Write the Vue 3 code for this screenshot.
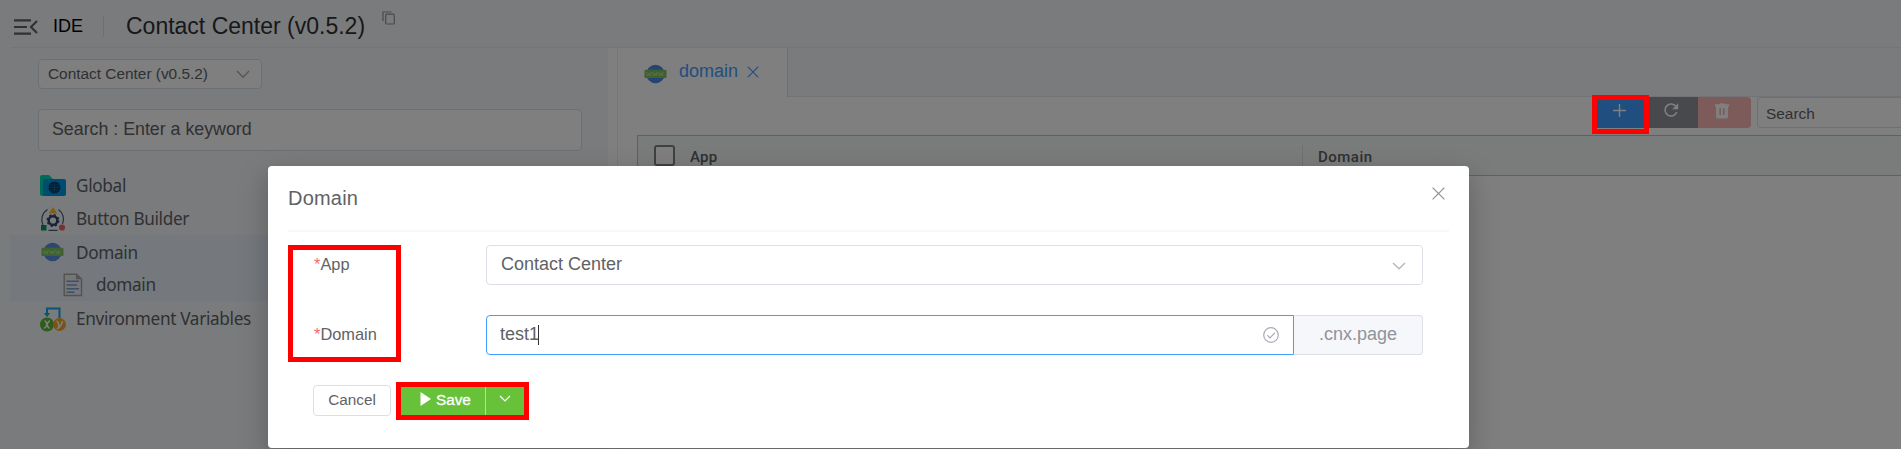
<script setup>
const tree = [
  { label: 'Global', icon: 'folder' },
  { label: 'Button Builder', icon: 'builder' },
  { label: 'Domain', icon: 'globe', active: true },
  { label: 'domain', icon: 'file', active: true, child: true },
  { label: 'Environment Variables', icon: 'env' },
]
</script>

<template>
  <div class="screen">
    <header class="topbar">
      <svg class="menu" width="24" height="16" viewBox="0 0 24 16" fill="none" stroke="#606266" stroke-width="2.2"><path d="M0 1.3h17M0 8h13M0 14.7h17M23 2l-6 6 6 6" /></svg>
      <span class="ide">IDE</span>
      <i class="bar"></i>
      <span class="app-title">Contact Center (v0.5.2)</span>
      <svg class="copy" width="14" height="15" viewBox="0 0 14 15" fill="none" stroke="#909399" stroke-width="1.2"><path d="M1 10V1h8.500" /><rect x="3.700" y="3.200" width="8.600" height="9.800" rx="1" /></svg>
    </header>

    <div class="body">
      <aside class="sidebar">
        <div class="select">
          <span>Contact Center (v0.5.2)</span>
          <svg width="14" height="9" viewBox="0 0 14 9" fill="none" stroke="#a8abb2" stroke-width="1.3"><path d="M1 1l6 6.3L13 1" /></svg>
        </div>
        <div class="search">Search : Enter a keyword</div>
        <div class="tree">
          <div v-for="n in tree" :key="n.label" class="node" :class="{ active: n.active, child: n.child }">
            <span class="ico">
              <svg v-if="n.icon === 'folder'" width="26" height="24" viewBox="0 0 26 24">
                <path d="M0 3a2 2 0 0 1 2-2h7l4 4v17H2a2 2 0 0 1-2-2z" fill="#00d8b0" />
                <rect x="3" y="5" width="23" height="17" rx="2" fill="#0098e0" />
                <circle cx="14.5" cy="13.5" r="6" fill="#073c68" />
                <path d="M8.5 13.5h12M14.5 7.500v12M10 10.500q4.500 2 9 0M10 16.500q4.500-2 9 0" stroke="#0872a8" stroke-width=".7" fill="none" />
              </svg>
              <svg v-else-if="n.icon === 'builder'" width="26" height="26" viewBox="0 0 26 26">
                <path d="M7.500 3.500A12 12 0 0 0 3 19M18.500 3.500A12 12 0 0 1 22.500 18M8.500 24.300h9" fill="none" stroke="#4a5a80" stroke-width="1.200" />
                <path d="M13 1l4.200 6.500H8.800z" fill="#ffbe28" />
                <circle cx="13" cy="14.500" r="4.300" fill="none" stroke="#354570" stroke-width="2.400" />
                <circle cx="13" cy="14.500" r="5.700" fill="none" stroke="#354570" stroke-width="1.500" stroke-dasharray="2.200 2.277" />
                <rect x="1" y="19" width="5.500" height="5.500" fill="#08926c" />
                <circle cx="22" cy="21.500" r="3.100" fill="#f06464" />
              </svg>
              <svg v-else-if="n.icon === 'globe'" width="26" height="22" viewBox="0 0 26 22">
                <circle cx="12.500" cy="11" r="9.200" fill="#5a8ee0" />
                <rect x="1.500" y="6.800" width="22" height="8.200" rx="1" fill="#80c060" />
                <path d="M3.500 9l1 4 1.300-3 1.300 3 1-4M9.500 9l1 4 1.300-3 1.300 3 1-4M15.500 9l1 4 1.300-3 1.300 3 1-4" fill="none" stroke="#b4e89a" stroke-width=".8" />
              </svg>
              <svg v-else-if="n.icon === 'file'" width="20" height="24" viewBox="0 0 20 24">
                <path d="M1.200 1.200h12.300l5 4.800v16.500H1.200z" fill="#e9edf2" stroke="#aaa69e" stroke-width="1.400" />
                <path d="M13 1.200V6.300h5.500z" fill="#aaa69e" />
                <path d="M3.500 8.300h12.500M3.500 12h10.500M3.500 15.700h12.500M3.500 19.300h8" stroke="#7d9fca" stroke-width="1.500" />
              </svg>
              <svg v-else width="26" height="26" viewBox="0 0 26 26">
                <path d="M7 8V2.500h12.500V12" fill="none" stroke="#12a8e8" stroke-width="2" />
                <path d="M3.800 7h6.400L7 11z" fill="#12a8e8" />
                <circle cx="7" cy="18.500" r="7" fill="#5cb838" /><circle cx="19.500" cy="18.500" r="6.500" fill="#f4a828" />
                <path d="M4.500 15q1.500-.3 2.500 3.500t2.600 3.500M10 15q-1.500 0-3 3.500t-3 3.500" fill="none" stroke="#fff" stroke-width="1.500" />
                <path d="M16.500 15q1.800 0 2.300 5.500M22.500 15q-1 5-5.500 8" fill="none" stroke="#fff" stroke-width="1.500" />
              </svg>
            </span>
            <span class="label">{{ n.label }}</span>
          </div>
        </div>
      </aside>
      <div class="splitter"></div>
      <main class="main">
        <div class="tabs">
          <div class="tab">
            <svg width="26" height="22" viewBox="0 0 26 22">
              <circle cx="12.500" cy="11" r="9.200" fill="#4c86e8" />
              <rect x="1.500" y="6.800" width="22" height="8.200" rx="1" fill="#80c060" />
              <path d="M3.500 9l1 4 1.300-3 1.300 3 1-4M9.500 9l1 4 1.300-3 1.300 3 1-4M15.500 9l1 4 1.300-3 1.300 3 1-4" fill="none" stroke="#b4e89a" stroke-width=".8" />
            </svg>
            <span>domain</span>
            <svg class="x" width="12" height="12" viewBox="0 0 12 12" stroke="#409eff" stroke-width="1.200"><path d="M.7.7l10.600 10.600M11.300.7L.7 11.300" /></svg>
          </div>
        </div>
        <div class="toolbar">
          <div class="btn add"><svg width="13" height="13" viewBox="0 0 13 13" stroke="#fff" stroke-width="1.400"><path d="M6.500 0v13M0 6.500h13" /></svg></div>
          <div class="btn reload">
            <svg width="16" height="15" viewBox="0 0 16 15"><path d="M13 3.600A6 6 0 1 0 13.700 9" fill="none" stroke="#fff" stroke-width="1.600" /><path d="M15.200.3v6H9.300z" fill="#fff" /></svg>
          </div>
          <div class="btn del">
            <svg width="14" height="16" viewBox="0 0 14 16"><path d="M0 1.300h4L5 .3h4l1 1h4v2.400h-1V14a1.500 1.500 0 0 1-1.500 1.500h-9A1.500 1.500 0 0 1 1 14V3.700H0z" fill="#fff" /><path d="M5.200 5v7M8.800 5v7" stroke="#fab6b6" stroke-width="1.600" /></svg>
          </div>
          <div class="find">Search</div>
        </div>
        <div class="thead">
          <i class="check"></i>
          <span class="th-app">App</span>
          <span class="th-domain">Domain</span>
        </div>
      </main>
    </div>

    <div class="mask"></div>

    <section class="dialog">
      <div class="dialog-head">
        <span>Domain</span>
        <svg width="13" height="13" viewBox="0 0 13 13" stroke="#909399" stroke-width="1.300"><path d="M.6.6l11.800 11.800M12.400.6L.6 12.400" /></svg>
      </div>
      <div class="row">
        <label><b>*</b>App</label>
        <div class="field picker">
          <span>Contact Center</span>
          <svg width="14" height="8" viewBox="0 0 14 8" fill="none" stroke="#b4b7bd" stroke-width="1.400"><path d="M1 1l6 5.700L13 1" /></svg>
        </div>
      </div>
      <div class="row">
        <label><b>*</b>Domain</label>
        <div class="group">
          <div class="field focus">
            <span>test1</span><i class="caret"></i>
            <svg width="16" height="16" viewBox="0 0 16 16" fill="none" stroke="#a8abb2" stroke-width="1.200"><circle cx="8" cy="8" r="7.300" /><path d="M4.300 8.200l2.700 2.700 5-5.300" /></svg>
          </div>
          <div class="append">.cnx.page</div>
        </div>
      </div>
      <div class="actions">
        <div class="cancel">Cancel</div>
        <div class="save">
          <svg width="11" height="14" viewBox="0 0 11 14"><path d="M.5 0L11 7 .5 14z" fill="#fff" /></svg>
          <span>Save</span>
        </div>
        <div class="more"><svg width="12" height="8" viewBox="0 0 12 8" fill="none" stroke="#fff" stroke-width="1.200"><path d="M1 1l5 5 5-5" /></svg></div>
      </div>
    </section>

    <i class="mark mark-add"></i>
    <i class="mark mark-labels"></i>
    <i class="mark mark-save"></i>
  </div>
</template>

<style>
body { margin: 0; overflow: hidden; }
</style>

<style scoped>
* { box-sizing: border-box; }
svg { display: block; flex: none; }
.screen { position: relative; width: 1901px; height: 449px; overflow: hidden; background: #f5f7fa; font-family: "Liberation Sans", Arial, sans-serif; color: #606266; display: flex; flex-direction: column; white-space: nowrap; }
.topbar { height: 48px; flex: none; margin-left: 10px; border-bottom: 1px solid #e9ebf0; display: flex; align-items: center; padding: 6px 0 0 4px; }
.menu { margin-right: -1px; }
.ide { margin-left: 16px; font-size: 18px; color: #000; width: 35px; }
.bar { width: 1px; height: 21px; margin-left: 15px; background: #dcdfe6; }
.app-title { margin: -2px 0 0 22px; font-size: 23px; line-height: 28px; color: #303133; width: 240px; }
.copy { margin: -17px 0 0 16px; }
.body { flex: 1; display: flex; min-height: 0; }
.sidebar { width: 608px; padding: 11px 0 0 10px; flex: none; }
.select { width: 224px; height: 30px; margin-left: 28px; border: 1px solid #dcdfe6; border-radius: 4px; background: #fff; display: flex; align-items: center; justify-content: space-between; padding: 0 11px 0 9px; font-size: 15.400px; }
.search { width: 544px; height: 42px; margin: 20px 0 0 28px; border: 1px solid #dcdfe6; border-radius: 4px; background: #fff; padding: 0 13px; line-height: 38px; font-size: 17.800px; color: #606266; }
.tree { margin-top: 18px; }
.node { height: 33px; display: flex; align-items: center; padding-left: 30px; font-family: "Noto Sans", "Open Sans", sans-serif; font-size: 17.200px; letter-spacing: -.33px; line-height: 33px; }
.node:last-child { height: 35px; }
.node.active { background: #ebf1fa; }
.node.active:not(.child) .label { padding-top: 2px; }
.ico { width: 26px; }
.label { margin-left: 10px; }
.child { padding-left: 53px; }
.child .ico { width: 20px; }
.child .label { margin-left: 13px; }
.splitter { width: 10px; background: #fff; border-right: 1px solid #eceef2; flex: none; }
.main { flex: 1; background: #fff; min-width: 0; }
.tabs { height: 49px; background: #f5f7fa; border-bottom: 1px solid #e4e7ed; }
.tab { width: 170px; height: 49px; background: #fff; border-right: 1px solid #dcdfe6; display: flex; align-items: center; padding: 0 0 2px 25px; font-size: 18px; color: #409eff; }
.tab svg:first-child { margin-top: 4px; }
.tab span { margin: -1px 0 0 10px; }
.tab .x { margin-left: 9px; }
.toolbar { height: 38px; display: flex; justify-content: flex-end; align-items: flex-start; }
.btn { height: 31px; display: flex; align-items: center; justify-content: center; padding: 0 5px 4px 0; }
.add { width: 52px; background: #409eff; padding-right: 8px; }
.reload { width: 49px; background: #909399; }
.del { width: 53px; background: #fab6b6; border-radius: 0 4px 4px 0; }
.find { width: 144px; height: 31px; margin-left: 6px; border: 1px solid #dcdfe6; border-right: 0; border-radius: 4px 0 0 4px; padding-left: 8px; line-height: 31px; font-size: 15.400px; }
.thead { height: 41px; margin-left: 19px; background: #f5f9f7; border: 1px solid #bdc3c7; border-right: 0; display: flex; align-items: flex-start; padding: 9px 0 0 16px; font-family: Roboto, sans-serif; font-size: 15px; font-weight: 500; color: #606266; }
.check { width: 21px; height: 21px; border: 2px solid #7c8389; border-radius: 3px; background: #fff; }
.th-app { margin: 3px 0 0 15px; width: 612px; letter-spacing: .3px; }
.th-domain { border-left: 1px solid #dde2e0; height: 22px; padding: 3px 0 0 15px; letter-spacing: .5px; }
.mask { position: absolute; inset: 0; background: rgba(0, 0, 0, .5); }
.dialog { position: absolute; left: 268px; top: 166px; width: 1201px; height: 282px; background: #fff; border-radius: 4px; box-shadow: 0 12px 32px 4px rgba(0, 0, 0, .12), 0 8px 20px rgba(0, 0, 0, .1); padding: 0 20px; }
.dialog-head { height: 66px; border-bottom: 2px solid #f5f9fd; display: flex; justify-content: space-between; padding: 21px 4px 0 0; font-size: 20px; line-height: 22px; letter-spacing: .2px; }
.row { display: flex; height: 40px; margin: 13px 26px 0 26px; }
.row + .row { margin-top: 30px; }
.row label { width: 172px; font-size: 16.400px; line-height: 39px; }
.row label b { color: #f56c6c; font-weight: 400; }
.field { flex: 1; height: 40px; border: 1px solid #dcdfe6; border-radius: 4px; display: flex; align-items: center; padding: 0 16px 1px 14px; font-size: 18px; }
.picker { justify-content: space-between; }
.picker svg { margin-top: 2px; }
.group { flex: 1; display: flex; }
.focus { border-color: #409eff; border-radius: 4px 0 0 4px; padding-left: 13px; padding-right: 14px; }
.caret { width: 1px; height: 20px; background: #303133; margin-left: -1px; }
.focus svg { margin: 1px 0 0 auto; }
.append { width: 129px; background: #f5f7fa; border: 1px solid #dcdfe6; border-left: 0; border-radius: 0 4px 4px 0; color: #909399; font-size: 18px; line-height: 37px; text-align: center; }
.actions { display: flex; margin: 30px 0 0 25px; font-size: 15.300px; }
.cancel { width: 78px; height: 31px; border: 1px solid #dcdfe6; border-radius: 4px; text-align: center; line-height: 28px; }
.save { margin-left: 9px; width: 85px; height: 31px; background: #67c23a; color: #fff; display: flex; align-items: center; padding: 0 0 1px 20px; -webkit-text-stroke: .3px #fff; }
.save svg { margin-top: -3px; }
.save span { margin-left: 5px; }
.more { width: 40px; height: 31px; background: #67c23a; border-left: 1px solid #b3e09c; display: flex; align-items: center; justify-content: center; padding: 0 1px 3px 0; }
.mark { position: absolute; border: 5px solid #f00; }
.mark-add { left: 1592px; top: 95px; width: 57px; height: 39px; }
.mark-labels { left: 288px; top: 245px; width: 113px; height: 117px; }
.mark-save { left: 396px; top: 382px; width: 133px; height: 38px; }
</style>
